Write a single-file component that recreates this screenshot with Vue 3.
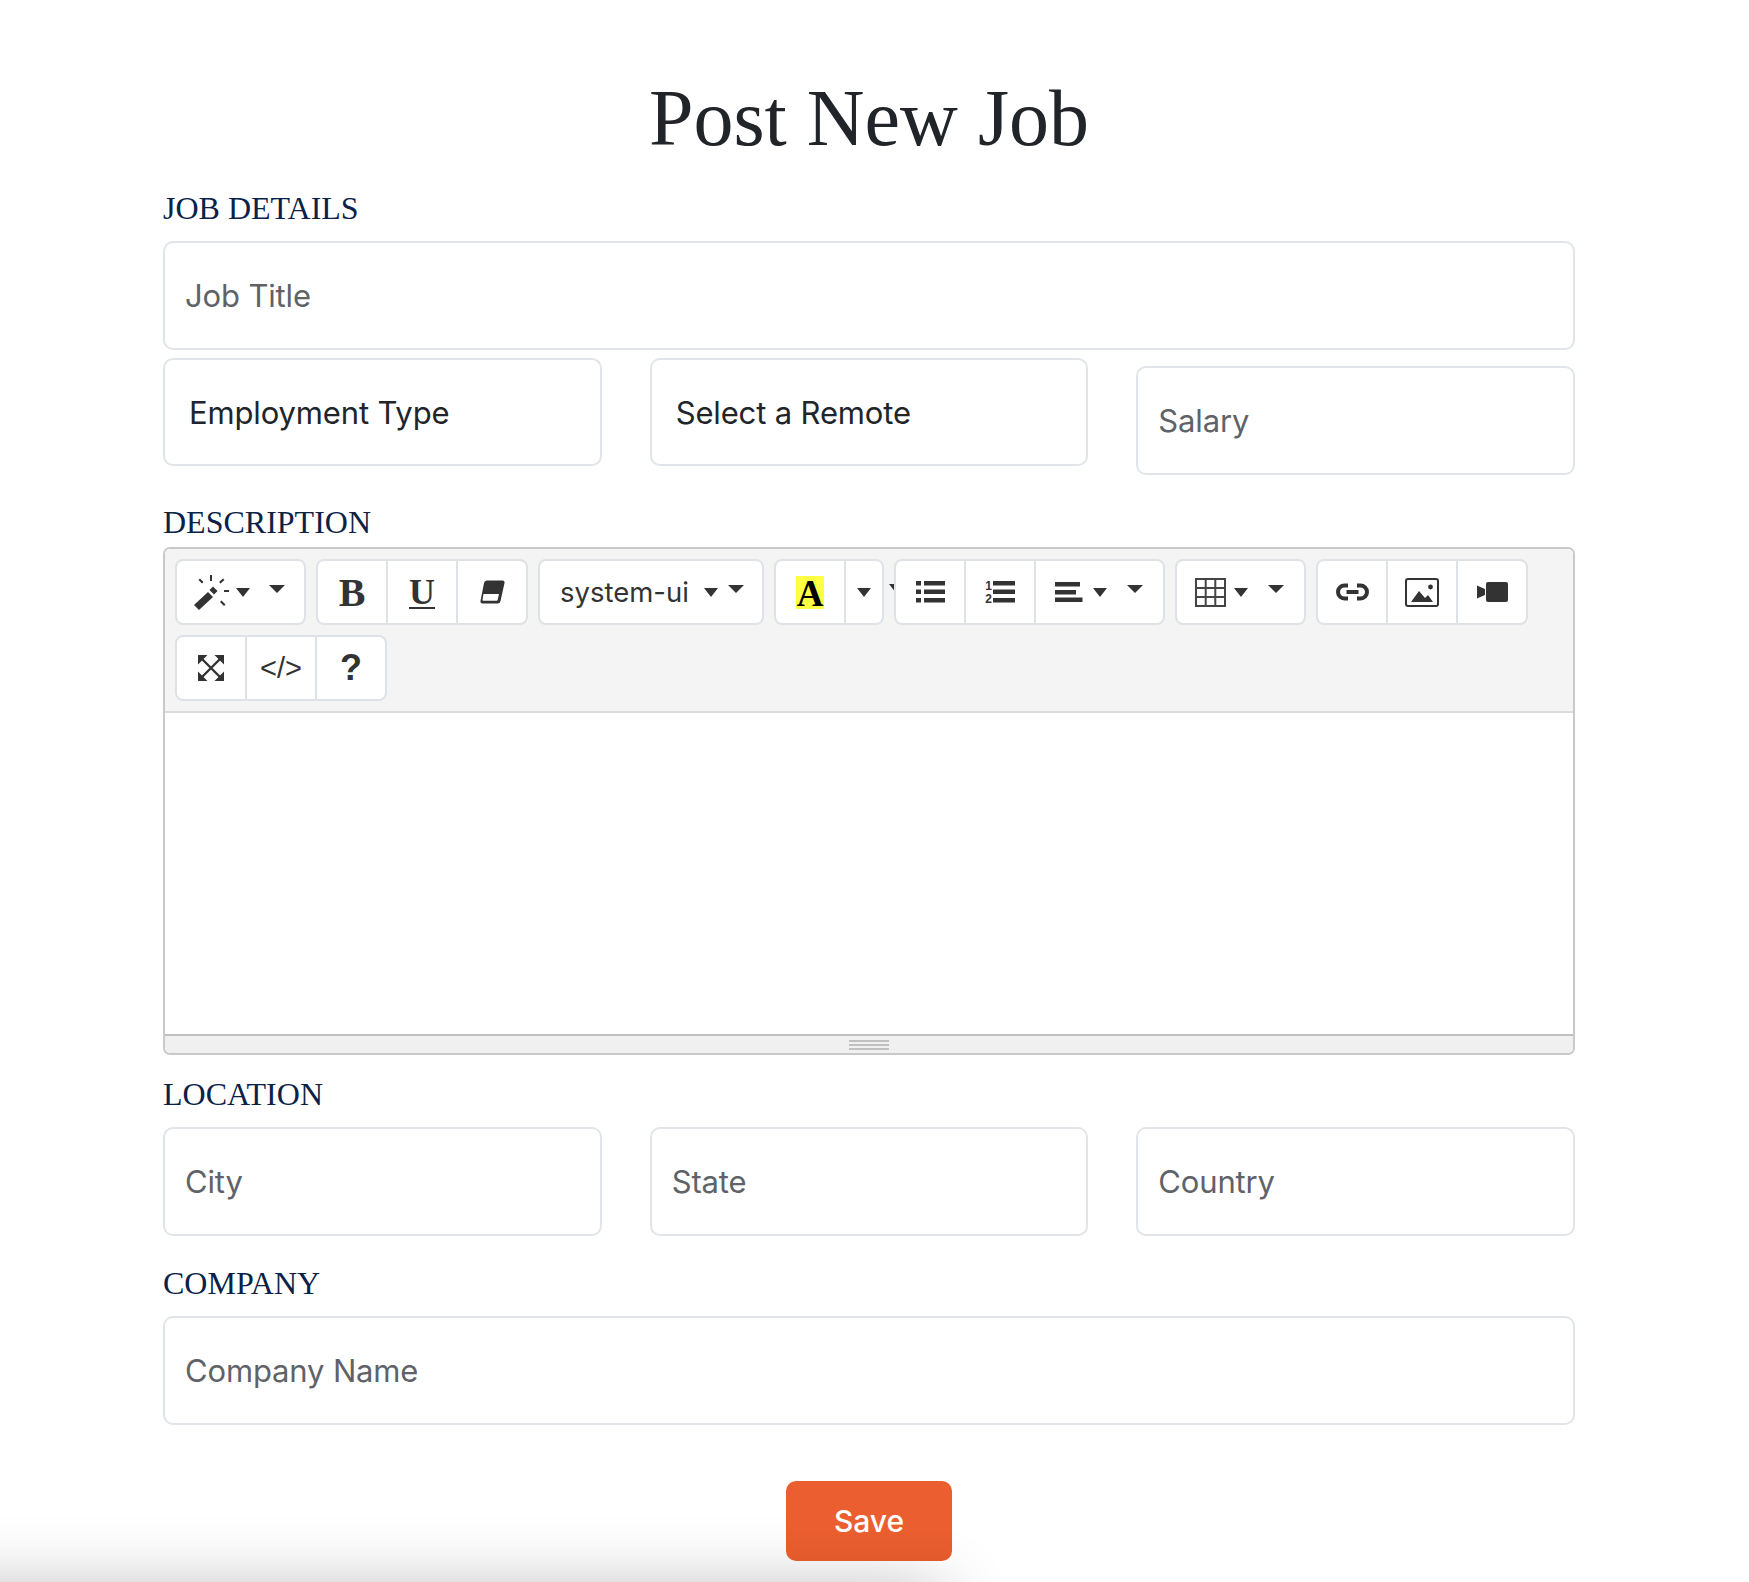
<template>
  <div class="page">
    <div class="shade"></div>
    <form class="job-form" @submit.prevent>
      <h1>Post New Job</h1>

      <h2 class="first">JOB DETAILS</h2>
      <input class="field" placeholder="Job Title" />
      <div class="three top-row">
        <select class="field pick"><option>Employment Type</option></select>
        <select class="field pick"><option>Select a Remote</option></select>
        <input class="field salary" placeholder="Salary" />
      </div>

      <h2 class="desc">DESCRIPTION</h2>
      <div class="editor">
        <div class="toolbar">
          <div class="group">
            <button type="button" class="btn drop wand-btn">
              <svg width="38" height="37" viewBox="0 0 38 37" fill="#333">
                <path d="M1 31 15 18 20 23 6 36Z" />
                <path d="M16.500 16 20 12.500 24.500 17 21 20.500Z" />
                <path d="M17 1h2v6h-2zM5.500 6 7 4.500 10.500 8 9 9.500zM26 8l4-3.500 1.500 1.500-4 3.500zM31 16h5v2h-5zM27 28l1.500-1.500 4 4-1.500 1.500z" />
              </svg>
              <i class="caret low" style="margin-left: 5px"></i>
              <i class="caret high" style="margin-left: 19px"></i>
            </button>
          </div>

          <div class="group">
            <button type="button" class="btn glyph-b">B</button>
            <button type="button" class="btn glyph-u">U</button>
            <button type="button" class="btn">
              <svg width="25" height="24" viewBox="0 0 25 24" fill="#333">
                <path d="M7 .500h15.500a2 2 0 0 1 2 2.500L20.500 21a3 3 0 0 1-3 2.500H2.500A2 2 0 0 1 .5 21L4 3A3 3 0 0 1 7 .500Z" />
                <path d="M3.500 14h15.500l-1.400 6a1 1 0 0 1-1 .800H3.500a1 1 0 0 1-1-1.200Z" fill="#fff" />
              </svg>
            </button>
          </div>

          <div class="group">
            <button type="button" class="btn font-btn">
              <span>system-ui</span>
              <i class="caret low" style="margin-left: 15px"></i>
              <i class="caret high" style="margin-left: 10px"></i>
            </button>
          </div>

          <div class="group color-group">
            <button type="button" class="btn"><span class="glyph-a">A</span></button>
            <button type="button" class="btn caret-only"><i class="caret"></i></button>
            <i class="caret peek"></i>
          </div>

          <div class="group over">
            <button type="button" class="btn">
              <svg width="29" height="24" viewBox="0 0 29 24" fill="#333">
                <path d="M0 1h5v4.500H0zM0 9.500h5V14H0zM0 18h5v4.500H0zM8 1h21v4.500H8zM8 9.500h21V14H8zM8 18h21v4.500H8z" />
              </svg>
            </button>
            <button type="button" class="btn ol">
              <span class="nums"><b>1</b><b>2</b></span>
              <svg width="22" height="24" viewBox="0 0 22 24" fill="#333">
                <path d="M0 1h22v4.500H0zM0 9.500h22V14H0zM0 18h22v4.500H0z" />
              </svg>
            </button>
            <button type="button" class="btn drop align-btn">
              <svg width="28" height="20" viewBox="0 0 28 20" fill="#333">
                <path d="M0 0h25v4.500H0zM0 8h21v4.500H0zM0 15.500h27.500V20H0z" />
              </svg>
              <i class="caret low" style="margin-left: 10px"></i>
              <i class="caret high" style="margin-left: 20px"></i>
            </button>
          </div>

          <div class="group">
            <button type="button" class="btn drop table-btn">
              <svg width="31" height="29" viewBox="0 0 31 29" fill="none" stroke="#444" stroke-width="2">
                <path d="M1 1h29v27H1zM10.700 1v27M20.300 1v27M1 10h29M1 19h29" />
              </svg>
              <i class="caret low" style="margin-left: 8px"></i>
              <i class="caret high" style="margin-left: 20px"></i>
            </button>
          </div>

          <div class="group">
            <button type="button" class="btn">
              <svg width="33" height="18" viewBox="0 0 33 18" fill="none" stroke="#333" stroke-width="4">
                <path d="M12 2.500H8.500a6.500 6.500 0 0 0 0 13H12M21 2.500h3.500a6.500 6.500 0 0 1 0 13H21M10.500 9h12" />
              </svg>
            </button>
            <button type="button" class="btn">
              <svg width="34" height="29" viewBox="0 0 34 29" fill="#333">
                <rect x="1" y="1" width="32" height="27" rx="2" fill="none" stroke="#333" stroke-width="2" />
                <path d="M6 24 14 13 20 20 23 17 28 24Z" />
                <circle cx="25.500" cy="9" r="2.400" />
              </svg>
            </button>
            <button type="button" class="btn">
              <svg width="31" height="20" viewBox="0 0 31 20" fill="#333">
                <rect x="9" y="0" width="22" height="20" rx="2" />
                <path d="M0 3.500 8 7v6l-8 3.500Z" />
              </svg>
            </button>
          </div>

          <div class="group">
            <button type="button" class="btn">
              <svg width="26" height="26" viewBox="0 0 26 26" fill="#333" stroke="none">
                <path d="M0 0h9.500L0 9.500ZM26 0v9.500L16.500 0ZM0 26v-9.500L9.500 26ZM26 26h-9.500L26 16.500Z" />
                <path d="M3 3 23 23M23 3 3 23" stroke="#333" stroke-width="2.400" fill="none" />
              </svg>
            </button>
            <button type="button" class="btn code">&lt;/&gt;</button>
            <button type="button" class="btn help">?</button>
          </div>
        </div>
        <div class="editable"></div>
        <div class="resizer"><span></span></div>
      </div>

      <h2 class="loc">LOCATION</h2>
      <div class="three">
        <input class="field" placeholder="City" />
        <input class="field" placeholder="State" />
        <input class="field" placeholder="Country" />
      </div>

      <h2 class="comp">COMPANY</h2>
      <input class="field" placeholder="Company Name" />

      <div class="actions">
        <button type="submit" class="save">Save</button>
      </div>
    </form>
  </div>
</template>

<script setup>
</script>

<style>
html,
body {
  margin: 0;
  background: #fff;
}
</style>

<style scoped>
.page {
  position: relative;
  height: 1582px;
  overflow: hidden;
  background: #fff;
}

.shade {
  position: absolute;
  left: -120px;
  top: 1592px;
  width: 1060px;
  height: 60px;
  box-shadow: 0 0 70px rgba(0, 0, 0, 0.3);
}

.job-form {
  position: relative;
  width: 1412px;
  margin-left: 163px;
  font-family: Inter, "Liberation Sans", sans-serif;
}

h1 {
  margin: 0;
  padding-top: 73px;
  font: 400 80px/90px "Liberation Serif", serif;
  color: #212529;
  text-align: center;
}

h2 {
  margin: 0 0 14px;
  font: 400 32px/38px "Liberation Serif", serif;
  color: #0a2248;
}

.first {
  margin-top: 26px;
}

.desc {
  margin-top: 28px;
  margin-bottom: 6px;
}

.loc {
  margin-top: 20px;
}

.comp {
  margin-top: 28px;
}

.field {
  display: block;
  box-sizing: border-box;
  width: 100%;
  height: 109px;
  padding: 0 20px;
  border: 2px solid #e1e5e9;
  border-radius: 10px;
  background: #fff;
  font: 400 31px Inter, "Liberation Sans", sans-serif;
  letter-spacing: -0.15px;
  color: #212529;
  outline: none;
}

.field::placeholder {
  color: #5f6368;
  opacity: 1;
}

.pick {
  appearance: none;
  height: 108px;
  padding-left: 24px;
}

.salary {
  margin-top: 8px;
}

.three {
  display: grid;
  grid-template-columns: repeat(3, 1fr);
  column-gap: 48px;
  align-items: start;
}

.top-row {
  margin-top: 8px;
}

.editor {
  box-sizing: border-box;
  height: 508px;
  border: 2px solid #c9c9c9;
  border-radius: 7px;
  display: flex;
  flex-direction: column;
  overflow: hidden;
}

.toolbar {
  display: flex;
  flex-wrap: wrap;
  align-content: flex-start;
  gap: 10px;
  box-sizing: border-box;
  height: 164px;
  padding: 10px 10px 0;
  background: #f4f4f4;
  border-bottom: 2px solid #dcdcdc;
}

.group {
  position: relative;
  display: flex;
  height: 66px;
  box-sizing: border-box;
  border: 2px solid #dee2e6;
  border-radius: 8px;
  background: #fff;
}

.over {
  z-index: 1;
}

.btn {
  display: flex;
  align-items: center;
  justify-content: center;
  width: 70px;
  padding: 0;
  border: 0;
  border-right: 2px solid #dee2e6;
  background: none;
  color: #333;
  box-sizing: border-box;
  flex: none;
}

.btn:last-of-type {
  width: 68px;
  border-right: 0;
}

.btn.wand-btn,
.btn.table-btn {
  width: 127px;
  justify-content: flex-start;
}

.btn.wand-btn {
  padding-left: 16px;
}

.btn.align-btn {
  width: 127px;
  justify-content: flex-start;
  padding-left: 19px;
}

.btn.table-btn {
  padding-left: 18px;
}

.btn.caret-only {
  width: 36px;
}

.caret {
  display: block;
  width: 0;
  height: 0;
  border-left: 7px solid transparent;
  border-right: 7px solid transparent;
  border-top: 9px solid #333;
  flex: none;
}

.low {
  margin-top: 1px;
}

.high {
  margin-top: -7px;
  border-left-width: 8px;
  border-right-width: 8px;
  border-top-width: 8px;
}

.peek {
  position: absolute;
  left: 113px;
  top: 23px;
}

.glyph-b {
  font: 700 40px "Liberation Serif", serif;
}

.glyph-u {
  font: 700 36px/1 "Liberation Serif", serif;
  text-decoration: underline;
  text-decoration-thickness: 2px;
  text-underline-offset: 3px;
}

.btn.font-btn {
  width: 222px;
  justify-content: flex-start;
  padding-left: 20px;
  font: 400 27.5px Inter, "Liberation Sans", sans-serif;
  white-space: nowrap;
}

.glyph-a {
  display: block;
  width: 28px;
  height: 33px;
  background: #ffff44;
  color: #000;
  font: 700 37px/35px "Liberation Serif", serif;
  text-align: center;
}

.ol {
  gap: 1px;
}

.nums {
  display: flex;
  flex-direction: column;
  gap: 1px;
  padding-top: 1px;
}

.nums b {
  font: 700 12px/12px "Liberation Sans", sans-serif;
}

.code {
  font: 400 29px "Liberation Sans", sans-serif;
}

.help {
  font: 700 36px "Liberation Sans", sans-serif;
}

.editable {
  flex: 1;
  background: #fff;
  min-height: 0;
}

.resizer {
  flex: none;
  height: 19px;
  box-sizing: border-box;
  display: flex;
  align-items: center;
  justify-content: center;
  background: #f0f0f0;
  border-top: 2px solid #c0c0c0;
}

.resizer span {
  display: block;
  width: 40px;
  height: 10px;
  border-top: 2px solid #c0c0c0;
  border-bottom: 2px solid #c0c0c0;
  box-sizing: border-box;
  background: linear-gradient(#c0c0c0, #c0c0c0) center / 100% 2px no-repeat;
}

.actions {
  display: flex;
  justify-content: center;
  margin-top: 56px;
}

.save {
  width: 166px;
  height: 80px;
  border: 0;
  border-radius: 10px;
  background: linear-gradient(#ea5e2f 60%, #e25a2c);
  color: #fff;
  font: 500 30px Inter, "Liberation Sans", sans-serif;
}
</style>
